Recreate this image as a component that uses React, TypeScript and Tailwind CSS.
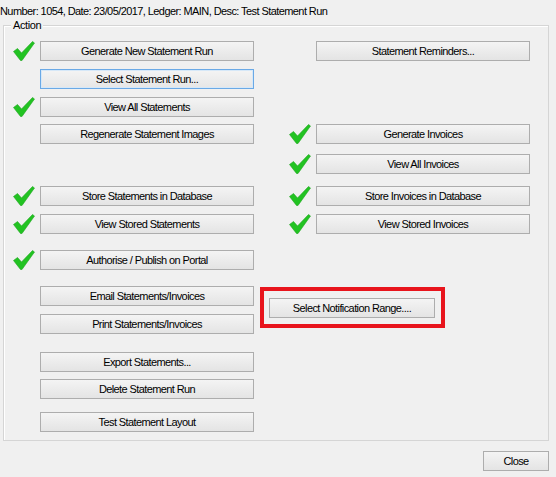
import React from "react";

const Check = () => (
  <svg width="22" height="20" viewBox="0 0 22 20" className="block">
    <path d="M0.5 10.5 L4.5 7.5 L8.5 12 L19.5 0.5 L21.5 2 L9 19.5 L7.5 19.5 Z" fill="#22c322" stroke="#1fa51f" strokeWidth="0.6" strokeLinejoin="round" />
  </svg>
);

const Btn = ({ label, focused = false, w = "w-[214px]" }: { label: string; focused?: boolean; w?: string }) => (
  <div
    className={`${w} h-[20px] flex items-center justify-center border text-[11px] leading-[13px] tracking-[-0.6px] text-black ${
      focused
        ? "border-[#6aa9e6] bg-linear-to-b from-[#f4f4f4] to-[#e6e6e6] shadow-[inset_0_0_0_1px_#d6e8f8]"
        : "border-[#adadad] bg-linear-to-b from-[#f4f4f4] to-[#e4e4e4]"
    }`}
  >
    {label}
  </div>
);

const Cell = ({ label, check = false, focused = false }: { label?: string; check?: boolean; focused?: boolean }) => (
  <div className="flex items-center">
    <div className="w-[36px] h-[20px] flex items-center pl-[9px]">{check ? <Check /> : null}</div>
    {label ? <Btn label={label} focused={focused} /> : <div className="w-[214px] h-[20px]" />}
  </div>
);

const Row = ({ mt, children }: { mt: string; children: React.ReactNode }) => (
  <div className={`flex h-[20px] ${mt}`}>{children}</div>
);

const Right = ({ children }: { children: React.ReactNode }) => <div className="ml-[26px]">{children}</div>;

export default function App() {
  return (
    <div
      className="w-[556px] h-[477px] bg-[#f0f0f0] overflow-hidden text-black"
      style={{ fontFamily: '"Liberation Sans", Arial, sans-serif' }}
    >
      <div className="h-[25px] pt-[5px] text-[11px] leading-[13px] whitespace-nowrap tracking-[-0.58px]">
        Number: 1054, Date: 23/05/2017, Ledger: MAIN, Desc: Test Statement Run
      </div>
      <div className="ml-[3px] w-[546px] h-[416px] border border-[#d5d5d5] shadow-[inset_1px_1px_0_#ffffff] relative pt-[15px]">
        <div className="absolute left-[7px] top-[-7px] px-[2px] bg-[#f0f0f0] text-[11px] leading-[13px] tracking-[-0.4px]">Action</div>
        <Row mt="mt-0">
          <Cell label="Generate New Statement Run" check />
          <Right>
            <Cell label="Statement Reminders..." />
          </Right>
        </Row>
        <Row mt="mt-[8px]">
          <Cell label="Select Statement Run..." focused />
        </Row>
        <Row mt="mt-[8px]">
          <Cell label="View All Statements" check />
        </Row>
        <Row mt="mt-[7px]">
          <Cell label="Regenerate Statement Images" />
          <Right>
            <Cell label="Generate Invoices" check />
          </Right>
        </Row>
        <Row mt="mt-[10px]">
          <Cell />
          <Right>
            <Cell label="View All Invoices" check />
          </Right>
        </Row>
        <Row mt="mt-[12px]">
          <Cell label="Store Statements in Database" check />
          <Right>
            <Cell label="Store Invoices in Database" check />
          </Right>
        </Row>
        <Row mt="mt-[8px]">
          <Cell label="View Stored Statements" check />
          <Right>
            <Cell label="View Stored Invoices" check />
          </Right>
        </Row>
        <Row mt="mt-[16px]">
          <Cell label="Authorise / Publish on Portal" check />
        </Row>
        <div className="flex mt-[16px]">
          <div className="flex flex-col">
            <Cell label="Email Statements/Invoices" />
            <div className="mt-[8px]">
              <Cell label="Print Statements/Invoices" />
            </div>
          </div>
          <div className="ml-[6px] mt-[1px] w-[185px] h-[41px] border-[4px] border-[#e8141c] pl-[5px] pt-[7px]">
            <Btn label="Select Notification Range...." w="w-[166px]" />
          </div>
        </div>
        <Row mt="mt-[18px]">
          <Cell label="Export Statements..." />
        </Row>
        <Row mt="mt-[7px]">
          <Cell label="Delete Statement Run" />
        </Row>
        <Row mt="mt-[13px]">
          <Cell label="Test Statement Layout" />
        </Row>
      </div>
      <div className="flex justify-end pr-[7px] mt-[10px]">
        <Btn label="Close" w="w-[66px]" />
      </div>
    </div>
  );
}
